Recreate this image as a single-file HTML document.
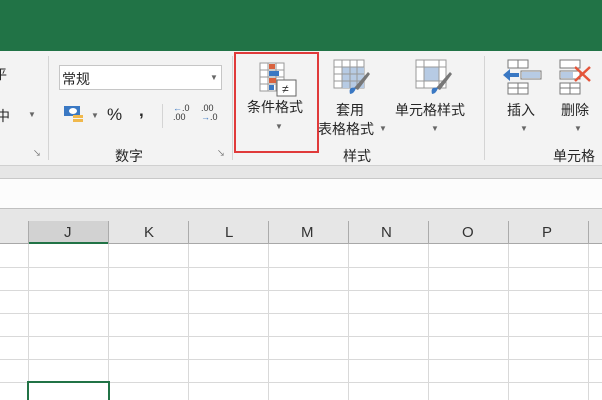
<!DOCTYPE html><html><head><meta charset="utf-8"><style>
body{margin:0;width:602px;height:400px;overflow:hidden;position:relative;background:#fff;font-family:"Liberation Sans","Noto Sans CJK SC",sans-serif;}
.a{position:absolute}
.t{position:absolute;font-size:14px;color:#262626;white-space:nowrap}
.s{position:absolute;font-size:8px;color:#666}
.vl{position:absolute;width:1px;background:#d4d4d4}
</style></head><body>
<div class="a" style="left:0;top:0;width:602px;height:51px;background:#217346"></div>
<div class="a" style="left:0;top:51px;width:602px;height:114px;background:#f3f3f3"></div>
<div class="a" style="left:0;top:165px;width:602px;height:13px;background:#e6e6e6;border-top:1px solid #d0d0d0;box-sizing:border-box"></div>
<div class="a" style="left:0;top:178px;width:602px;height:31px;background:#fcfcfc;border-top:1px solid #c8c8c8;border-bottom:1px solid #c0c0c0;box-sizing:border-box"></div>
<div class="a" style="left:0;top:209px;width:602px;height:35px;background:#e6e6e6;border-bottom:1px solid #a8a8a8;box-sizing:border-box"></div>
<!-- left partial -->
<div class="t" style="left:-6px;top:64px;font-size:13px">平</div>
<div class="t" style="left:-4px;top:106px">中</div>
<div class="s" style="left:28px;top:110px">▼</div>
<div class="s" style="left:33px;top:148px">↘</div>
<div class="vl" style="left:48px;top:56px;height:104px"></div>
<!-- number group -->
<div class="a" style="left:59px;top:65px;width:163px;height:25px;background:#fff;border:1px solid #c6c6c6;box-sizing:border-box"></div>
<div class="t" style="left:62px;top:69px">常规</div>
<div class="s" style="left:210px;top:73px">▼</div>
<svg class="a" style="left:63px;top:105px" width="22" height="20"><rect x="1" y="1" width="16" height="10" fill="#3a78c3"/><ellipse cx="10" cy="6" rx="4" ry="3" fill="#fff"/><rect x="10" y="10" width="10" height="3" fill="#f0b84c"/><rect x="10" y="14" width="10" height="3" fill="#f0b84c"/></svg>
<div class="s" style="left:91px;top:111px">▼</div>
<div class="t" style="left:107px;top:105px;font-size:17px">%</div>
<div class="t" style="left:139px;top:101px;font-size:17px;font-weight:bold">,</div>
<div class="vl" style="left:162px;top:104px;height:24px"></div>
<div class="a" style="left:173px;top:104px;font-size:9px;line-height:9px;color:#333"><span style="color:#3a78c3">←</span>.0<br>.00</div>
<div class="a" style="left:201px;top:104px;font-size:9px;line-height:9px;color:#333">.00<br><span style="color:#3a78c3">→</span>.0</div>
<div class="t" style="left:115px;top:146px">数字</div>
<div class="s" style="left:217px;top:148px">↘</div>
<div class="vl" style="left:232px;top:56px;height:104px"></div>
<!-- cond format -->
<svg class="a" style="left:258px;top:62px" width="40" height="36"><g stroke="#999" fill="#fff"><rect x="2" y="1" width="24" height="28"/></g><g stroke="#999"><line x1="2" y1="8" x2="26" y2="8"/><line x1="2" y1="15" x2="26" y2="15"/><line x1="2" y1="22" x2="26" y2="22"/><line x1="10" y1="1" x2="10" y2="29"/><line x1="18" y1="1" x2="18" y2="29"/></g><rect x="11" y="2" width="6" height="5" fill="#d9633f"/><rect x="11" y="9" width="10" height="5" fill="#3a78c3"/><rect x="11" y="16" width="7" height="5" fill="#d9633f"/><rect x="11" y="23" width="5" height="5" fill="#3a78c3"/><rect x="19" y="18" width="19" height="16" fill="#fff" stroke="#666"/><text x="24" y="31" font-size="12" fill="#333" font-family="Liberation Sans">≠</text></svg>
<div class="t" style="left:247px;top:97px">条件格式</div>
<div class="s" style="left:275px;top:122px">▼</div>
<div class="a" style="left:234px;top:52px;width:85px;height:101px;border:2px solid #e03a3a;box-sizing:border-box"></div>
<svg class="a" style="left:332px;top:58px" width="40" height="38"><rect x="2" y="2" width="30" height="28" fill="#fff" stroke="#999"/><rect x="10" y="9" width="22" height="21" fill="#b7cbe4"/><g stroke="#999"><line x1="2" y1="9" x2="32" y2="9"/><line x1="2" y1="16" x2="32" y2="16"/><line x1="2" y1="23" x2="32" y2="23"/><line x1="10" y1="2" x2="10" y2="30"/><line x1="18" y1="2" x2="18" y2="30"/><line x1="25" y1="2" x2="25" y2="30"/></g><path d="M22 30 L36 14 L38 16 L26 32Z" fill="#777"/><path d="M18 36 Q16 28 24 30 Q22 36 18 36Z" fill="#3a78c3"/></svg>
<div class="t" style="left:336px;top:100px">套用</div>
<div class="t" style="left:318px;top:119px">表格格式</div>
<div class="s" style="left:379px;top:124px">▼</div>
<svg class="a" style="left:414px;top:58px" width="40" height="38"><rect x="2" y="2" width="30" height="28" fill="#fff" stroke="#999"/><rect x="10" y="9" width="15" height="14" fill="#b7cbe4"/><g stroke="#999"><line x1="2" y1="9" x2="32" y2="9"/><line x1="2" y1="23" x2="32" y2="23"/><line x1="10" y1="2" x2="10" y2="30"/><line x1="25" y1="2" x2="25" y2="30"/></g><path d="M22 30 L36 14 L38 16 L26 32Z" fill="#777"/><path d="M18 36 Q16 28 24 30 Q22 36 18 36Z" fill="#3a78c3"/></svg>
<div class="t" style="left:395px;top:100px">单元格样式</div>
<div class="s" style="left:431px;top:124px">▼</div>
<div class="t" style="left:343px;top:146px">样式</div>
<div class="vl" style="left:484px;top:56px;height:104px"></div>
<!-- cells -->
<svg class="a" style="left:502px;top:59px" width="40" height="36"><g fill="#fff" stroke="#777"><rect x="6" y="1" width="20" height="8"/><rect x="6" y="24" width="20" height="11"/><rect x="19" y="12" width="20" height="8"/></g><line x1="16" y1="1" x2="16" y2="9" stroke="#777"/><line x1="16" y1="24" x2="16" y2="35" stroke="#777"/><line x1="6" y1="29" x2="26" y2="29" stroke="#777"/><rect x="20" y="13" width="18" height="6" fill="#b7cbe4"/><path d="M1 16 L8 10 L8 14 L17 14 L17 18 L8 18 L8 22Z" fill="#3a78c3"/></svg>
<div class="t" style="left:507px;top:100px">插入</div>
<div class="s" style="left:520px;top:124px">▼</div>
<svg class="a" style="left:558px;top:59px" width="44" height="36"><g fill="#fff" stroke="#777"><rect x="2" y="1" width="20" height="8"/><rect x="2" y="24" width="20" height="11"/><rect x="2" y="12" width="20" height="8"/></g><rect x="3" y="13" width="12" height="6" fill="#b7cbe4"/><line x1="12" y1="24" x2="12" y2="35" stroke="#777"/><line x1="2" y1="29" x2="22" y2="29" stroke="#777"/><path d="M17 8 L32 22 M32 8 L17 22" stroke="#e5553a" stroke-width="2.5"/></svg>
<div class="t" style="left:561px;top:100px">删除</div>
<div class="s" style="left:574px;top:124px">▼</div>
<div class="t" style="left:553px;top:146px">单元格</div>
<!-- headers -->
<div class="a" style="left:28px;top:221px;width:80px;height:23px;background:#d2d2d2;border-bottom:2px solid #217346;box-sizing:border-box"></div>
<div class="a" style="left:0;top:221px;width:602px;height:23px;font-size:15px;color:#333">
<span class="a" style="left:64px;top:3px">J</span><span class="a" style="left:144px;top:3px">K</span><span class="a" style="left:225px;top:3px">L</span><span class="a" style="left:301px;top:3px">M</span><span class="a" style="left:381px;top:3px">N</span><span class="a" style="left:462px;top:3px">O</span><span class="a" style="left:542px;top:3px">P</span></div>
<svg class="a" style="left:0;top:221px" width="602" height="179">
<g stroke="#ababab"><line x1="28.5" y1="0" x2="28.5" y2="23"/><line x1="108.5" y1="0" x2="108.5" y2="23"/><line x1="188.5" y1="0" x2="188.5" y2="23"/><line x1="268.5" y1="0" x2="268.5" y2="23"/><line x1="348.5" y1="0" x2="348.5" y2="23"/><line x1="428.5" y1="0" x2="428.5" y2="23"/><line x1="508.5" y1="0" x2="508.5" y2="23"/><line x1="588.5" y1="0" x2="588.5" y2="23"/></g>
<g stroke="#d9d9d9"><line x1="28.5" y1="23" x2="28.5" y2="179"/><line x1="108.5" y1="23" x2="108.5" y2="179"/><line x1="188.5" y1="23" x2="188.5" y2="179"/><line x1="268.5" y1="23" x2="268.5" y2="179"/><line x1="348.5" y1="23" x2="348.5" y2="179"/><line x1="428.5" y1="23" x2="428.5" y2="179"/><line x1="508.5" y1="23" x2="508.5" y2="179"/><line x1="588.5" y1="23" x2="588.5" y2="179"/>
<line x1="0" y1="46.5" x2="602" y2="46.5"/><line x1="0" y1="69.5" x2="602" y2="69.5"/><line x1="0" y1="92.5" x2="602" y2="92.5"/><line x1="0" y1="115.5" x2="602" y2="115.5"/><line x1="0" y1="138.5" x2="602" y2="138.5"/><line x1="0" y1="161.5" x2="602" y2="161.5"/></g>
<rect x="28" y="161" width="81" height="22" fill="none" stroke="#217346" stroke-width="2"/>
</svg>
</body></html>
